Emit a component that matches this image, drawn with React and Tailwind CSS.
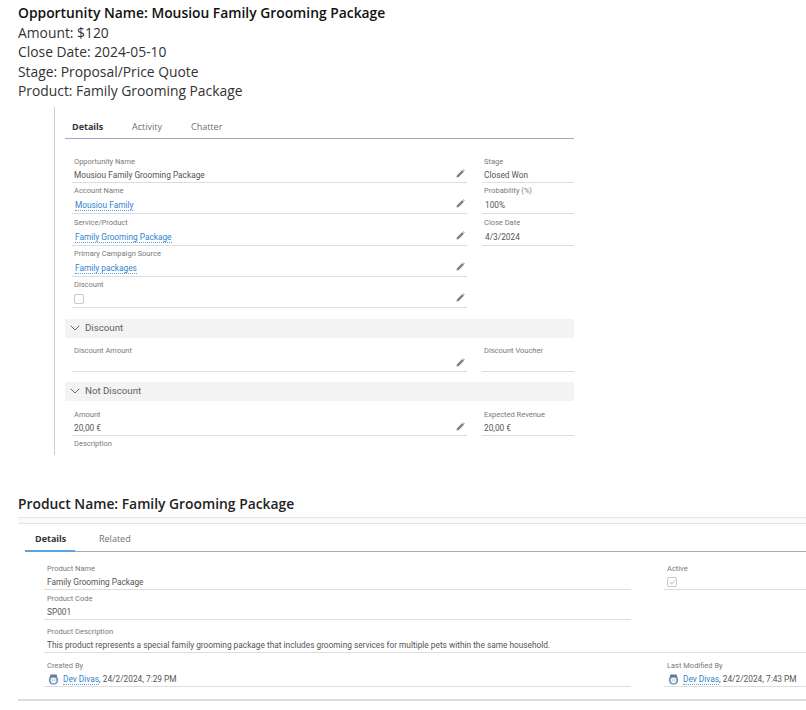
import { ChevronDown, Check } from "lucide-react";

function Pencil() {
  return (
    <svg width="9" height="9" viewBox="0 0 9 9" className="shrink-0 mb-[4px]">
      <path d="M0.4 8.6 L1 6.3 L6.3 1 L8 2.7 L2.7 8 Z M6.9 0.5 L7.4 0.2 L8.8 1.6 L8.5 2.1 Z" fill="#808080" />
    </svg>
  );
}

function Avatar() {
  return (
    <svg width="11" height="11" viewBox="0 0 11 11" className="shrink-0">
      <circle cx="5.5" cy="6" r="4.8" fill="#7f9ab6" />
      <rect x="2" y="0.6" width="7" height="2.6" rx="1" fill="#607c99" />
      <circle cx="5.5" cy="6.4" r="2.8" fill="#f2f5f8" />
      <circle cx="4.4" cy="6" r="0.5" fill="#607c99" />
      <circle cx="6.6" cy="6" r="0.5" fill="#607c99" />
    </svg>
  );
}

function Field({ label, height, pencil, tall, pad = "px-[2px]", children }) {
  return (
    <div className={`border-b border-[#dddddd] flex flex-col justify-end font-['Roboto',sans-serif] ${pad} ${height}`}>
      <div className="text-[7.5px] leading-[11px] text-[#7a7a7a]">{label}</div>
      <div className={`flex items-center justify-between pt-[2px] text-[8.3px] text-[#555555] ${tall ? "h-[17px]" : "h-[15px]"}`}>
        <div className={tall ? "pl-[1px]" : ""}>{children}</div>
        {pencil && <Pencil />}
      </div>
    </div>
  );
}

function LinkText({ children }) {
  return <span className="text-[#2f84cf] border-b border-dotted border-[#5aa3e0]">{children}</span>;
}

function Section({ title, className }) {
  return (
    <div className={`h-[19px] bg-[#f3f3f3] rounded-[2px] flex items-center pl-[2px] gap-[2px] text-[9.7px] text-[#606060] font-['Roboto',sans-serif] ${className}`}>
      <ChevronDown size={16} strokeWidth={1.5} color="#666666" />
      <span>{title}</span>
    </div>
  );
}

export default function App() {
  return (
    <div className="w-[806px] h-[710px] overflow-hidden bg-white font-['Open_Sans',sans-serif]">
      <div className="pl-[18px] pt-[3px] text-[13.85px] leading-[19.5px] text-[#333333]">
        <div className="font-semibold text-[#111111]">Opportunity Name: Mousiou Family Grooming Package</div>
        <div>Amount: $120</div>
        <div>Close Date: 2024-05-10</div>
        <div>Stage: Proposal/Price Quote</div>
        <div>Product: Family Grooming Package</div>
      </div>

      <div className="mt-[6px] ml-[54px] w-[520px] h-[348px] border-l border-[#cfcfcf] pl-[10px]">
        <div className="h-[32px] border-b border-[#a9a9a9] flex text-[9px] text-[#707070]">
          <div className="w-[46px] h-[32px] pl-[7px] pt-[10px] border-b border-[#b79ad6] flex items-center font-bold text-[#333333]">Details</div>
          <div className="ml-[21px] pt-[10px] flex items-center">Activity</div>
          <div className="ml-[29px] pt-[10px] flex items-center">Chatter</div>
        </div>

        <div className="grid grid-cols-[395px_92px] gap-x-[15px] pl-[7px] mt-[15px]">
          <div>
            <Field label="Opportunity Name" height="h-[29px]" pencil>Mousiou Family Grooming Package</Field>
            <Field label="Account Name" height="h-[31px]" pencil tall><LinkText>Mousiou Family</LinkText></Field>
            <Field label="Service/Product" height="h-[32px]" pencil tall><LinkText>Family Grooming Package</LinkText></Field>
            <Field label="Primary Campaign Source" height="h-[31px]" pencil tall><LinkText>Family packages</LinkText></Field>
            <Field label="Discount" height="h-[31px]" pencil tall>
              <div className="w-[10px] h-[10px] -ml-[1px] border border-[#c9c9c9] rounded-[2px]"></div>
            </Field>
          </div>
          <div>
            <Field label="Stage" height="h-[29px]">Closed Won</Field>
            <Field label="Probability (%)" height="h-[31px]" tall>100%</Field>
            <Field label="Close Date" height="h-[32px]" tall>4/3/2024</Field>
          </div>
        </div>

        <Section title="Discount" className="mt-[11px]" />
        <div className="grid grid-cols-[395px_92px] gap-x-[15px] pl-[7px]">
          <Field label="Discount Amount" height="h-[34px]" pencil></Field>
          <Field label="Discount Voucher" height="h-[34px]"></Field>
        </div>

        <Section title="Not Discount" className="mt-[10px]" />
        <div className="grid grid-cols-[395px_92px] gap-x-[15px] pl-[7px]">
          <Field label="Amount" height="h-[35px]" pencil>20,00 €</Field>
          <Field label="Expected Revenue" height="h-[35px]">20,00 €</Field>
        </div>
        <div className="pl-[9px] mt-[2px] text-[7.5px] leading-[11px] text-[#7a7a7a] font-['Roboto',sans-serif]">Description</div>
      </div>

      <div className="pl-[18px]">
        <div className="mt-[40px] h-[20px] flex items-center text-[13.85px] font-semibold text-[#222222]">Product Name: Family Grooming Package</div>
        <div className="mt-[2px] h-[7px] border-y border-[#e4e4e4] bg-[#fafafa]"></div>
        <div className="ml-[7px] h-[28px] border-b border-[#a9a9a9] flex text-[9px] text-[#707070]">
          <div className="w-[50px] h-[28px] pl-[10px] pt-[4px] border-b-2 border-[#5aa3e0] flex items-center font-bold text-[#333333]">Details</div>
          <div className="ml-[24px] pt-[4px] flex items-center">Related</div>
        </div>

        <div className="ml-[26px] mt-[10px]">
          <div className="grid grid-cols-[587px_142px] gap-x-[33px]">
            <div>
              <Field label="Product Name" height="h-[28px]" pad="px-[3px]">Family Grooming Package</Field>
              <Field label="Product Code" height="h-[30px]" pad="px-[3px]">SP001</Field>
            </div>
            <Field label="Active" height="h-[28px]" pad="px-[3px]">
              <div className="w-[10px] h-[10px] border border-[#c9c9c9] rounded-[2px] flex items-center justify-center">
                <Check size={7} strokeWidth={2} color="#777777" />
              </div>
            </Field>
          </div>
          <Field label="Product Description" height="h-[33px]" pad="px-[3px]">This product represents a special family grooming package that includes grooming services for multiple pets within the same household.</Field>
          <div className="grid grid-cols-[587px_142px] gap-x-[33px]">
            <Field label="Created By" height="h-[34px]" pad="px-[3px]">
              <div className="flex items-center gap-[4px] pl-[1px] whitespace-nowrap"><Avatar /><span><LinkText>Dev Divas</LinkText>, 24/2/2024, 7:29 PM</span></div>
            </Field>
            <Field label="Last Modified By" height="h-[34px]" pad="px-[3px]">
              <div className="flex items-center gap-[4px] pl-[1px] whitespace-nowrap"><Avatar /><span><LinkText>Dev Divas</LinkText>, 24/2/2024, 7:43 PM</span></div>
            </Field>
          </div>
        </div>
        <div className="mt-[12px] border-t-2 border-[#dddddd]"></div>
      </div>
    </div>
  );
}
